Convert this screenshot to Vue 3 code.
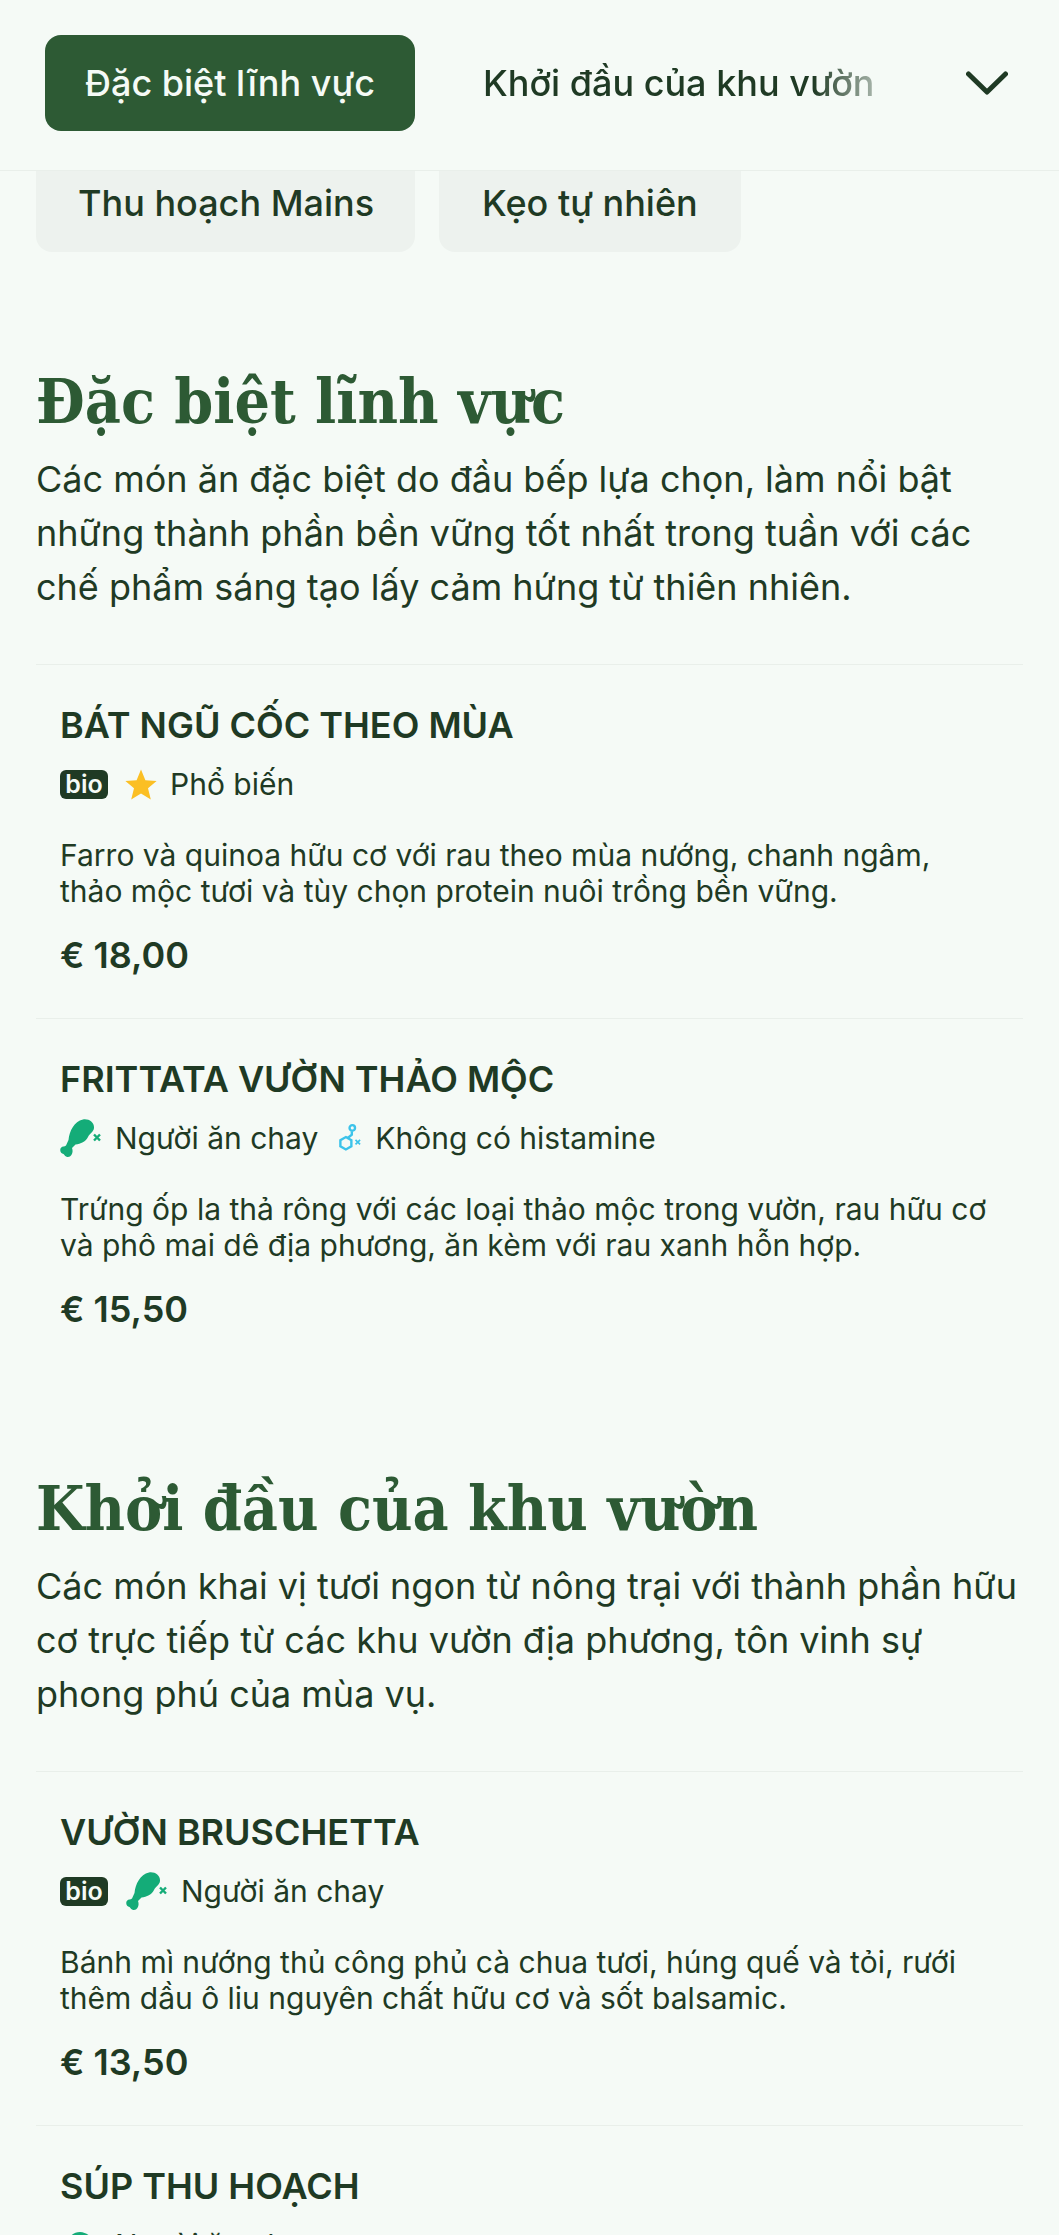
<script setup>
const sections = [
  {
    title: 'Đặc biệt lĩnh vực',
    desc: 'Các món ăn đặc biệt do đầu bếp lựa chọn, làm nổi bật những thành phần bền vững tốt nhất trong tuần với các chế phẩm sáng tạo lấy cảm hứng từ thiên nhiên.',
    items: [
      { name: 'Bát ngũ cốc theo mùa', tags: ['bio', 'popular'], desc: ['Farro và quinoa hữu cơ với rau theo mùa nướng, chanh ngâm,', 'thảo mộc tươi và tùy chọn protein nuôi trồng bền vững.'], price: '€ 18,00' },
      { name: 'Frittata vườn thảo mộc', tags: ['veg', 'hist'], desc: ['Trứng ốp la thả rông với các loại thảo mộc trong vườn, rau hữu cơ', 'và phô mai dê địa phương, ăn kèm với rau xanh hỗn hợp.'], price: '€ 15,50' }
    ]
  },
  {
    title: 'Khởi đầu của khu vườn',
    desc: 'Các món khai vị tươi ngon từ nông trại với thành phần hữu cơ trực tiếp từ các khu vườn địa phương, tôn vinh sự phong phú của mùa vụ.',
    items: [
      { name: 'Vườn Bruschetta', tags: ['bio', 'veg'], desc: ['Bánh mì nướng thủ công phủ cà chua tươi, húng quế và tỏi, rưới', 'thêm dầu ô liu nguyên chất hữu cơ và sốt balsamic.'], price: '€ 13,50' },
      { name: 'Súp thu hoạch', tags: ['leaf'], desc: [], price: '' }
    ]
  }
]
</script>

<template>
  <div class="page">
    <header class="topbar">
      <a class="tab active">Đặc biệt lĩnh vực</a>
      <div class="scroller"><a class="tab plain">Khởi đầu của khu vườn</a></div>
      <svg class="chevron" viewBox="0 0 42 24" fill="none">
        <polyline points="2.5,3 21,21 39.5,3" stroke="#1f3a24" stroke-width="5" stroke-linecap="round" stroke-linejoin="round" />
      </svg>
    </header>

    <div class="pills">
      <a class="pill first">Thu hoạch Mains</a>
      <a class="pill">Kẹo tự nhiên</a>
    </div>

    <section v-for="s in sections" :key="s.title" class="section">
      <h2>{{ s.title }}</h2>
      <p class="lead">{{ s.desc }}</p>
      <article v-for="it in s.items" :key="it.name" class="item">
        <h3>{{ it.name }}</h3>
        <div class="tags">
          <template v-for="t in it.tags" :key="t">
            <span v-if="t === 'bio'" class="bio">bio</span>
            <span v-else-if="t === 'popular'" class="tag pop">
              <svg class="star" viewBox="0 0 32 31"><polygon points="16,0.5 20.4,11.2 31.6,11.9 23,19.3 25.8,30.5 16,24.4 6.2,30.5 9,19.3 0.4,11.9 11.6,11.2" fill="#fbbf24" /></svg>
              Phổ biến
            </span>
            <span v-else-if="t === 'veg'" class="tag veg">
              <svg class="leg" viewBox="0 0 41 38" fill="none">
                <path d="M23 0.500C29 -0.500 34.500 3.500 34 9C33.600 13 29.500 14.500 28 18C26 22.500 20.500 25 15.500 25.500L12 29C13.500 32.500 12 37.500 8 38C5.500 38.200 4.500 36 3.500 35C0.800 35 -0.800 31 1 28.800C2.500 27 4.500 27.800 6 26.500L8.500 21C9.500 12 14 2.500 23 0.500Z" fill="#14ac78" />
                <path d="M34 15.500L40 21.500M40 15.500L34 21.500" stroke="#14ac78" stroke-width="2.400" />
              </svg>
              Người ăn chay
            </span>
            <span v-else-if="t === 'leaf'" class="tag veg">
              <svg class="leg" viewBox="0 0 41 38" fill="none">
                <path d="M20 6C12 6 6 13 6 22C6 28 10 33 16 33C26 33 32 22 30 10C27 8 24 6 20 6Z" fill="#14ac78" />
              </svg>
              Người ăn chay
            </span>
            <span v-else class="tag hist">
              <svg class="mol" viewBox="0 0 24 32" fill="none" stroke="#3cc3ea" stroke-width="2.600">
                <path d="M7.500 15L13.500 18.500L13.500 25L7.500 28.500L1.500 25L1.500 18.500Z" />
                <path d="M9.500 16L14 12.500L14 8.500" />
                <circle cx="14.500" cy="5" r="3" />
                <path d="M18 18L23 23M23 18L18 23" stroke-width="1.800" />
              </svg>
              Không có histamine
            </span>
          </template>
        </div>
        <p v-if="it.desc.length" class="idesc"><span v-for="l in it.desc" :key="l" class="ln">{{ l }}</span></p>
        <div v-if="it.price" class="price">{{ it.price }}</div>
      </article>
    </section>
  </div>
</template>

<style>
html, body { margin: 0; padding: 0; background: #f5faf6; }
</style>

<style scoped>
.page {
  width: 1059px;
  height: 2235px;
  overflow: hidden;
  background: #f5faf6;
  font-family: Inter, "Liberation Sans", sans-serif;
  color: #1f3a24;
}
.topbar {
  height: 170px;
  box-sizing: content-box;
  border-bottom: 1px solid #e9efea;
  display: flex;
  align-items: center;
  padding-left: 45px;
  position: relative;
}
.tab {
  font-size: 36px;
  font-weight: 500;
  white-space: nowrap;
}
.active {
  width: 370px;
  height: 96px;
  margin-top: -4px;
  background: #2d5a34;
  color: #f5faf6;
  border-radius: 16px;
  display: flex;
  align-items: center;
  justify-content: center;
}
.scroller {
  width: 393px;
  margin-left: 68px;
  margin-top: -4px;
  overflow: hidden;
  -webkit-mask-image: linear-gradient(to right, #000 84%, rgba(0,0,0,0.35) 100%);
  mask-image: linear-gradient(to right, #000 84%, rgba(0,0,0,0.35) 100%);
}
.chevron {
  width: 42px;
  height: 24px;
  margin-left: 90px;
  margin-top: -4px;
}
.pills {
  height: 81px;
  padding-left: 36px;
  display: flex;
  gap: 24px;
  align-items: flex-end;
  overflow: hidden;
}
.pill {
  height: 120px;
  padding: 0 43px 24px;
  box-sizing: border-box;
  display: flex;
  align-items: flex-end;
  font-size: 36px;
  font-weight: 500;
  line-height: 50px;
  background: #edf2ee;
  border-radius: 16px;
  white-space: nowrap;
}
.pill.first { padding-left: 42px; padding-right: 41px; }
.section {
  padding: 0 36px;
}
h2 {
  margin: 0;
  font-family: "DejaVu Serif Condensed", "DejaVu Serif", serif;
  font-stretch: condensed;
  font-size: 62px;
  font-weight: 700;
  line-height: 84px;
  color: #2d5a34;
}
.section:first-of-type h2 { margin-top: 108px; }
.section + .section h2 { margin-top: 95px; }
.lead {
  margin: 8px 0 0;
  font-size: 36px;
  line-height: 54px;
  width: 987px;
}
.item {
  height: 354px;
  box-sizing: border-box;
  border-top: 1px solid #e9efea;
  padding: 37px 24px 0;
}
.lead + .item { margin-top: 50px; }
h3 {
  margin: 0;
  font-size: 36px;
  font-weight: 600;
  line-height: 46px;
  text-transform: uppercase;
}
.tags {
  margin-top: 16px;
  height: 40px;
  display: flex;
  align-items: center;
  gap: 17px;
}
.bio {
  width: 48px;
  height: 29px;
  border-radius: 6px;
  background: #1f3a24;
  color: #f5faf6;
  font-size: 25px;
  font-weight: 600;
  display: flex;
  align-items: center;
  justify-content: center;
}
.tag {
  display: flex;
  align-items: center;
  gap: 14px;
  font-size: 30px;
  white-space: nowrap;
}
.pop { gap: 13px; }
.veg { gap: 15px; }
.hist { margin-left: 4px; }
.bio + .veg { margin-left: 1px; }
.star { width: 32px; height: 31px; }
.leg { width: 41px; height: 38px; margin-right: -1px; }
.mol { width: 22px; height: 30px; }
.idesc {
  margin: 33px 0 0;
  font-size: 30px;
  line-height: 36px;
}
.ln { display: block; white-space: nowrap; }
.price {
  margin-top: 23px;
  font-size: 36px;
  font-weight: 600;
  line-height: 46px;
}
</style>
